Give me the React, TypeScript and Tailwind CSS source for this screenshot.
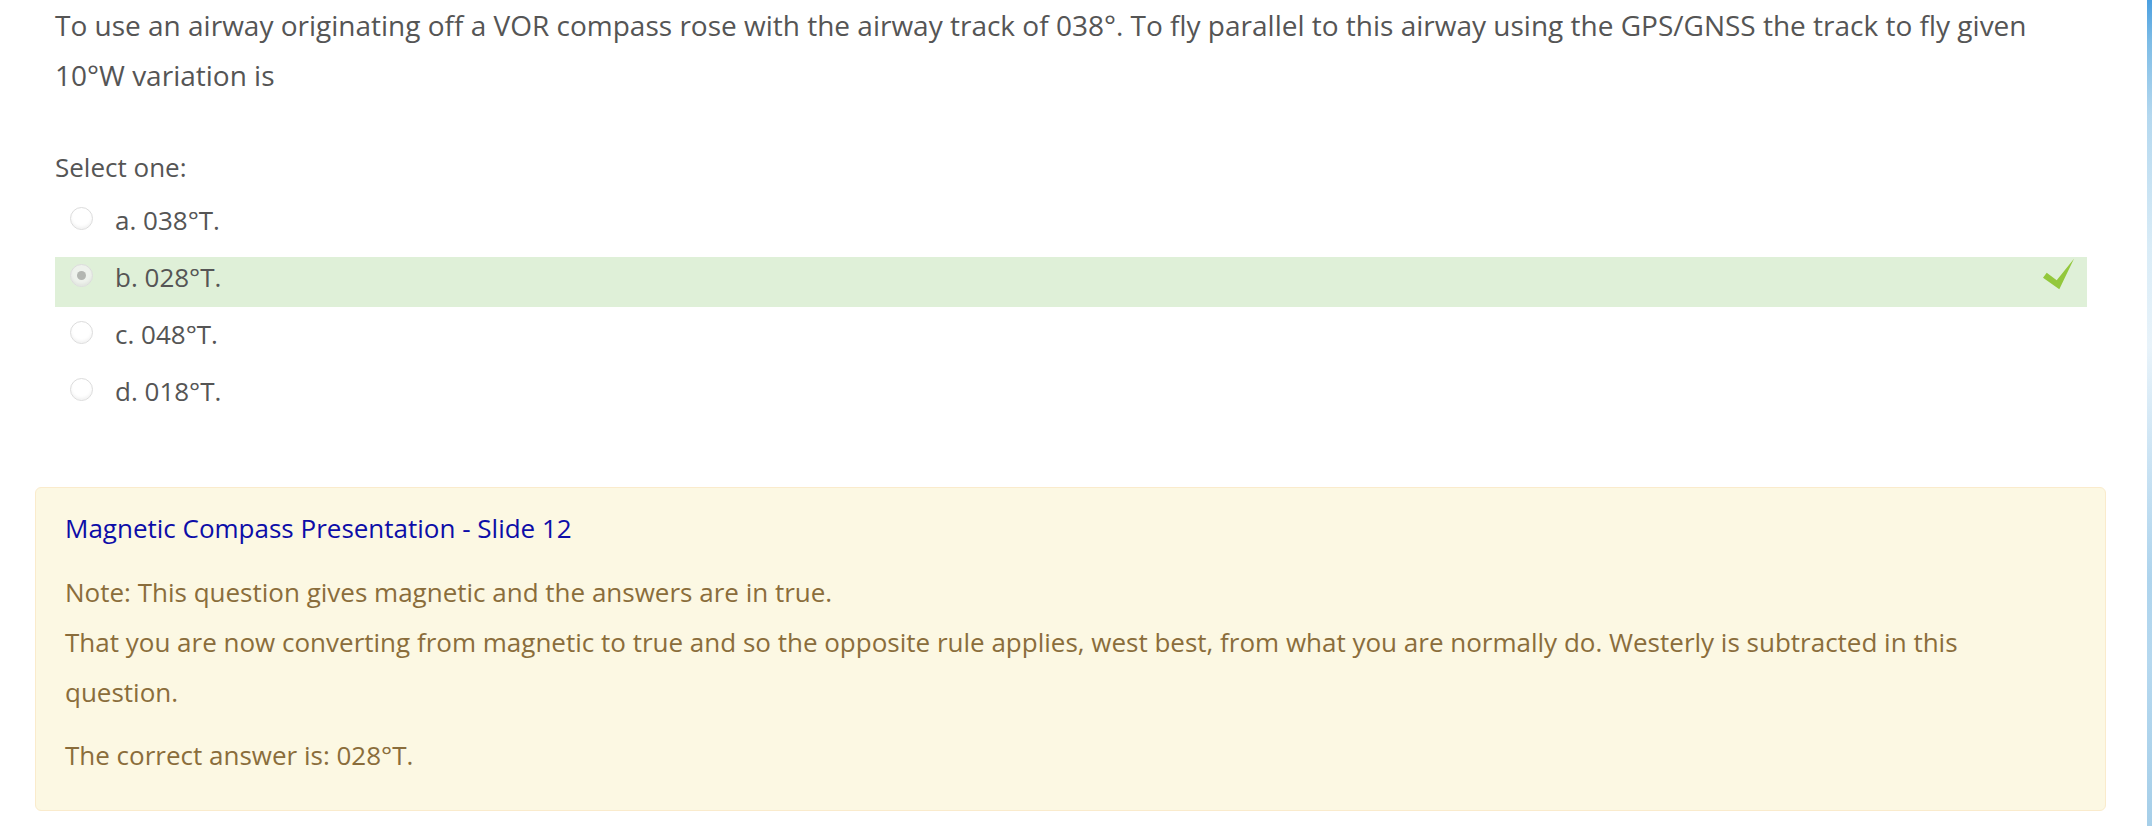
import React from "react";

interface OptionProps {
  letter: string;
  value: string;
  selected?: boolean;
  correct?: boolean;
}

const CheckMark = () => (
  <svg width="32" height="32" viewBox="0 0 32 32" className="block">
    <polygon
      points="0,19.7 3.7,14.7 13.7,22.3 31,0.7 16.3,31.2"
      fill="#93c83c"
    />
  </svg>
);

const Radio: React.FC<{ checked?: boolean }> = ({ checked }) => (
  <span
    className={`mt-[7px] flex h-[23px] w-[23px] shrink-0 items-center justify-center rounded-full border border-[#dcdcdc] shadow-[inset_0_-2px_3px_rgba(0,0,0,0.05)] ${
      checked ? "bg-[#eef2ec]" : "bg-white"
    }`}
  >
    {checked && <span className="h-[9px] w-[9px] rounded-full bg-[#b3b6b1]" />}
  </span>
);

const AnswerOption: React.FC<OptionProps> = ({
  letter,
  value,
  selected,
  correct,
}) => (
  <div
    className={`flex h-[50px] items-start pl-[15px] pr-[12px] ${
      correct ? "bg-[#dff0d8]" : ""
    }`}
  >
    <Radio checked={selected} />
    <span className="ml-[22px] leading-[40px]">
      {letter}. {value}
    </span>
    {correct && (
      <span className="ml-auto mt-[1px]">
        <CheckMark />
      </span>
    )}
  </div>
);

const App = () => (
  <div className="flex min-h-[826px] bg-white font-['Open_Sans',sans-serif] text-[26px] text-[#555]">
    <div className="flex-1 pl-[35px] pr-[41px]">
      <div className="pl-[20px] pr-[19px]">
        <p className="text-[28px] leading-[50px]">
          To use an airway originating off a VOR compass rose with the airway
          track of 038°. To fly parallel to this airway using the GPS/GNSS the
          track to fly given 10°W variation is
        </p>

        <div className="mt-[47px] leading-[40px]">Select one:</div>

        <div className="mt-[13px] flex flex-col gap-[7px]">
          <AnswerOption letter="a" value="038°T." />
          <AnswerOption letter="b" value="028°T." selected correct />
          <AnswerOption letter="c" value="048°T." />
          <AnswerOption letter="d" value="018°T." />
        </div>
      </div>

      <div className="mt-[66px] rounded-[6px] border border-[#faebcc] bg-[#fcf8e3] pb-[30px] pl-[29px] pr-[29px] pt-[15px] leading-[50px] text-[#8a6d3b]">
        <div className="text-[#0d0da8]">Magnetic Compass Presentation - Slide 12</div>
        <div className="mt-[14px]">
          <p>Note: This question gives magnetic and the answers are in true.</p>
          <p>
            That you are now converting from magnetic to true and so the
            opposite rule applies, west best, from what you are normally do.
            Westerly is subtracted in this question.
          </p>
        </div>
        <p className="mt-[13px]">The correct answer is: 028°T.</p>
      </div>
    </div>

    <div className="w-[5px] shrink-0 bg-[linear-gradient(to_bottom,#4a9fe0_0%,#7dbce6_5%,#b4d8ef_14%,#d9ecf7_30%,#e8f3fa_42%,#cce4f4_55%,#aed4ed_70%,#b5d8ef_80%,#a6cfe9_100%)]" />
  </div>
);

export default App;
